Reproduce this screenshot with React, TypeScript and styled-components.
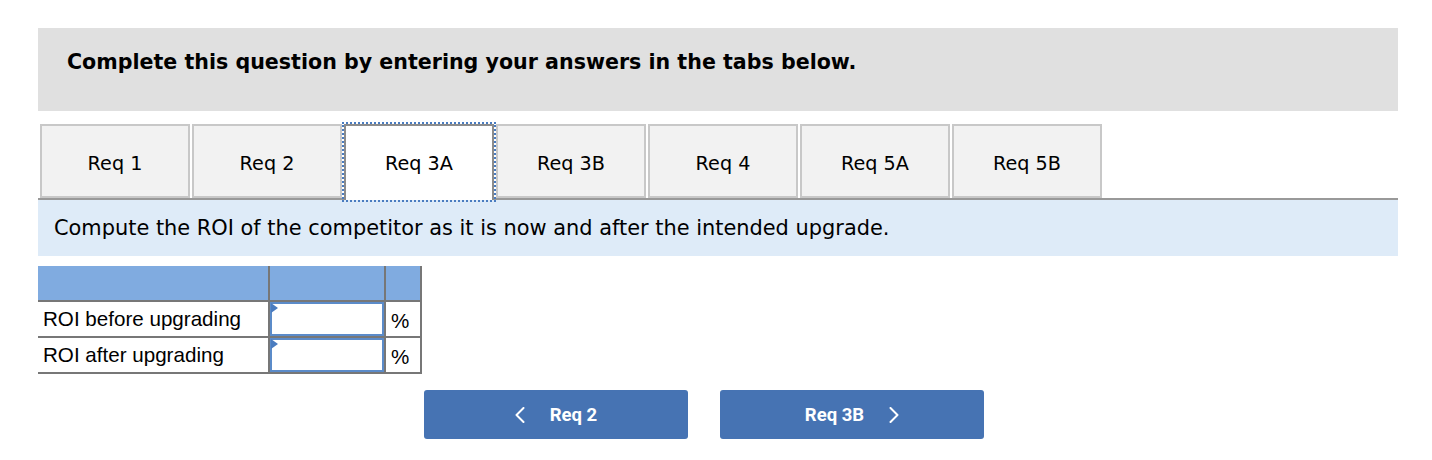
import React from "react";
import styled, { createGlobalStyle } from "styled-components";

const Global = createGlobalStyle`
  html, body { margin: 0; padding: 0; background: #ffffff; }
  body { font-family: "DejaVu Sans", Verdana, sans-serif; color: #000; }
  * { box-sizing: border-box; }
`;

const Page = styled.div`
  width: 1432px;
  padding: 28px 34px 0 38px;
`;

const Header = styled.div`
  height: 83px;
  background: #e0e0e0;
  padding: 21px 29px 0;
  font-size: 20.6px;
  line-height: 26px;
  font-weight: 700;
`;

const TabBar = styled.div`
  display: flex;
  align-items: flex-end;
  margin-top: 13px;
  padding-left: 2px;
  border-bottom: 2px solid #999999;
  height: 76px;
`;

const Tab = styled.div<{ $active?: boolean }>`
  width: 150px;
  height: ${(p) => (p.$active ? "76px" : "74px")};
  margin-right: 2px;
  margin-bottom: ${(p) => (p.$active ? "-2px" : "0")};
  display: flex;
  align-items: center;
  justify-content: center;
  padding-top: 4px;
  padding-bottom: ${(p) => (p.$active ? "4px" : "0")};
  font-size: 19.2px;
  background: ${(p) => (p.$active ? "#ffffff" : "#f2f2f2")};
  border: 2px solid ${(p) => (p.$active ? "#8c8c8c" : "#c8c8c8")};
  border-bottom: ${(p) => (p.$active ? "none" : "2px solid #c8c8c8")};
  outline: ${(p) => (p.$active ? "2px dotted #4a7cc0" : "none")};
  outline-offset: 0px;
`;

const Info = styled.div`
  height: 56px;
  background: #deebf8;
  display: flex;
  align-items: center;
  padding: 0 16px 0 16px;
  font-size: 20.9px;
`;

const Table = styled.div`
  margin-top: 10px;
  display: grid;
  grid-template-columns: 230px 2px 114px 2px 34px 2px;
  width: 384px;
  font-family: "Liberation Sans", Arial, sans-serif;
  font-size: 20.6px;
`;

const HeadCell = styled.div`
  height: 34px;
  background: #80abe0;
`;

const VLine = styled.div`
  background: #777777;
`;

const HLine = styled.div`
  grid-column: 1 / -1;
  height: 2px;
  background: #777777;
`;

const LabelCell = styled.div`
  height: 34px;
  display: flex;
  align-items: center;
  padding-left: 5px;
  white-space: nowrap;
`;

const InputCell = styled.div`
  height: 34px;
`;

const Field = styled.div`
  position: relative;
  width: 100%;
  height: 100%;
  border: 2px solid #5b8bc9;
  background: #fff;
  &::before {
    content: "";
    position: absolute;
    left: -1px;
    top: -1px;
    border-top: 5px solid transparent;
    border-bottom: 5px solid transparent;
    border-left: 7px solid #4a7cc0;
  }
`;

const UnitCell = styled.div`
  height: 34px;
  display: flex;
  align-items: center;
  padding-left: 5px;
  padding-top: 3px;
`;

const Nav = styled.div`
  display: flex;
  gap: 32px;
  margin-top: 16px;
  margin-left: 386px;
`;

const NavButton = styled.button`
  width: 264px;
  height: 49px;
  background: #4673b3;
  border: none;
  border-radius: 3px;
  color: #ffffff;
  font-family: Roboto, "Liberation Sans", sans-serif;
  font-weight: 700;
  font-size: 18.5px;
  display: flex;
  align-items: center;
  justify-content: center;
  gap: 25px;
  padding: 0;
`;

const Chevron = ({ dir }: { dir: "left" | "right" }) => (
  <svg width="10" height="16" viewBox="0 0 10 16" fill="none">
    <polyline
      points={dir === "left" ? "8.5,1 1.5,8 8.5,15" : "1.5,1 8.5,8 1.5,15"}
      stroke="#ffffff"
      strokeWidth="2"
      strokeLinecap="round"
      strokeLinejoin="round"
    />
  </svg>
);

const tabs = ["Req 1", "Req 2", "Req 3A", "Req 3B", "Req 4", "Req 5A", "Req 5B"];
const rows = ["ROI before upgrading", "ROI after upgrading"];

export default function App() {
  return (
    <Page>
      <Global />
      <Header>Complete this question by entering your answers in the tabs below.</Header>
      <TabBar>
        {tabs.map((t) => (
          <Tab key={t} $active={t === "Req 3A"}>
            {t}
          </Tab>
        ))}
      </TabBar>
      <Info>Compute the ROI of the competitor as it is now and after the intended upgrade.</Info>
      <Table>
        <HeadCell />
        <VLine />
        <HeadCell />
        <VLine />
        <HeadCell />
        <VLine />
        <HLine />
        {rows.map((r) => (
          <React.Fragment key={r}>
            <LabelCell>{r}</LabelCell>
            <VLine />
            <InputCell>
              <Field />
            </InputCell>
            <VLine />
            <UnitCell>%</UnitCell>
            <VLine />
            <HLine />
          </React.Fragment>
        ))}
      </Table>
      <Nav>
        <NavButton>
          <Chevron dir="left" />
          <span>Req 2</span>
        </NavButton>
        <NavButton>
          <span>Req 3B</span>
          <Chevron dir="right" />
        </NavButton>
      </Nav>
    </Page>
  );
}
